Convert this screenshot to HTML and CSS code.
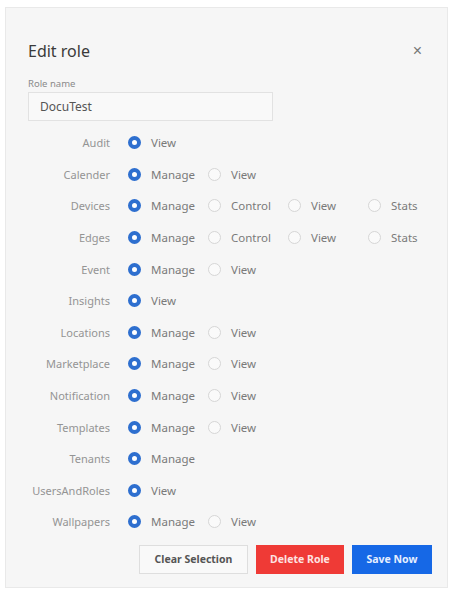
FILE: index.html
```html
<!DOCTYPE html>
<html lang="en">
  <head>
    <meta charset="UTF-8" />
    <meta name="viewport" content="width=device-width, initial-scale=1.0" />
    <title>Edit role</title>
    <link rel="stylesheet" href="styles.css">
  </head>
  <body>
    <div class="modal">
      <div class="modal-header">
        <h2 class="modal-title">Edit role</h2>
        <button type="button" class="close-btn">&times;</button>
      </div>

      <label class="field-label">Role name</label>
      <input type="text" class="role-input" value="DocuTest" />

      <div class="perm-list">
        <div class="perm-row">
          <span class="perm-name">Audit</span>
          <label class="opt"><span class="radio checked"></span>View</label>
        </div>
        <div class="perm-row">
          <span class="perm-name">Calender</span>
          <label class="opt"><span class="radio checked"></span>Manage</label>
          <label class="opt"><span class="radio"></span>View</label>
        </div>
        <div class="perm-row">
          <span class="perm-name">Devices</span>
          <label class="opt"><span class="radio checked"></span>Manage</label>
          <label class="opt"><span class="radio"></span>Control</label>
          <label class="opt"><span class="radio"></span>View</label>
          <label class="opt"><span class="radio"></span>Stats</label>
        </div>
        <div class="perm-row">
          <span class="perm-name">Edges</span>
          <label class="opt"><span class="radio checked"></span>Manage</label>
          <label class="opt"><span class="radio"></span>Control</label>
          <label class="opt"><span class="radio"></span>View</label>
          <label class="opt"><span class="radio"></span>Stats</label>
        </div>
        <div class="perm-row">
          <span class="perm-name">Event</span>
          <label class="opt"><span class="radio checked"></span>Manage</label>
          <label class="opt"><span class="radio"></span>View</label>
        </div>
        <div class="perm-row">
          <span class="perm-name">Insights</span>
          <label class="opt"><span class="radio checked"></span>View</label>
        </div>
        <div class="perm-row">
          <span class="perm-name">Locations</span>
          <label class="opt"><span class="radio checked"></span>Manage</label>
          <label class="opt"><span class="radio"></span>View</label>
        </div>
        <div class="perm-row">
          <span class="perm-name">Marketplace</span>
          <label class="opt"><span class="radio checked"></span>Manage</label>
          <label class="opt"><span class="radio"></span>View</label>
        </div>
        <div class="perm-row">
          <span class="perm-name">Notification</span>
          <label class="opt"><span class="radio checked"></span>Manage</label>
          <label class="opt"><span class="radio"></span>View</label>
        </div>
        <div class="perm-row">
          <span class="perm-name">Templates</span>
          <label class="opt"><span class="radio checked"></span>Manage</label>
          <label class="opt"><span class="radio"></span>View</label>
        </div>
        <div class="perm-row">
          <span class="perm-name">Tenants</span>
          <label class="opt"><span class="radio checked"></span>Manage</label>
        </div>
        <div class="perm-row">
          <span class="perm-name">UsersAndRoles</span>
          <label class="opt"><span class="radio checked"></span>View</label>
        </div>
        <div class="perm-row">
          <span class="perm-name">Wallpapers</span>
          <label class="opt"><span class="radio checked"></span>Manage</label>
          <label class="opt"><span class="radio"></span>View</label>
        </div>
      </div>

      <div class="actions">
        <button type="button" class="btn btn-clear">Clear Selection</button>
        <button type="button" class="btn btn-delete">Delete Role</button>
        <button type="button" class="btn btn-save">Save Now</button>
      </div>
    </div>
  </body>
</html>
```

FILE: styles.css
```css
body {
  margin: 0;
  background: #ffffff;
  font-family: "Noto Sans", "Open Sans", sans-serif;
}
.modal {
  width: 443px;
  height: 581px;
  margin: 7px 0 0 5px;
  box-sizing: border-box;
  padding: 33px 15px 0 22px;
  background: #f6f6f6;
  border: 1px solid #e9e9e9;
}
.modal-header {
  display: flex;
  justify-content: space-between;
  align-items: center;
  height: 20px;
}
.modal-title {
  margin: 0;
  font-size: 16px;
  font-weight: 400;
  color: #3a3a3a;
}
.close-btn {
  margin-right: 10px;
  border: none;
  background: none;
  padding: 0;
  font-size: 16px;
  color: #777;
  line-height: 1;
}
.field-label {
  display: block;
  margin-top: 16px;
  font-size: 9.5px;
  color: #8a8a8a;
  line-height: 13px;
}
.role-input {
  display: block;
  width: 245px;
  height: 29px;
  margin-top: 2px;
  padding: 0 11px;
  box-sizing: border-box;
  border: 1px solid #e2e2e2;
  background: #f9f9f9;
  font-family: inherit;
  font-size: 12px;
  color: #555;
}
.perm-list {
  margin-top: 6px;
}
.perm-row {
  display: flex;
  align-items: center;
  height: 31.6px;
}
.perm-name {
  flex-shrink: 0;
  width: 82px;
  margin-right: 18px;
  text-align: right;
  font-size: 11px;
  color: #949494;
}
.opt {
  flex-shrink: 0;
  display: flex;
  align-items: center;
  width: 80px;
  font-size: 11.5px;
  color: #7a7a7a;
}
.radio {
  width: 13px;
  height: 13px;
  margin-right: 10px;
  box-sizing: border-box;
  border-radius: 50%;
  border: 1px solid #d6d6d6;
  background: #fafafa;
}
.radio.checked {
  border: 4px solid #2e6fcf;
  background: #ffffff;
}
.actions {
  display: flex;
  justify-content: flex-end;
  gap: 8px;
  margin-top: 7px;
}
.btn {
  height: 29px;
  border: none;
  padding: 0 12px;
  font-family: inherit;
  font-size: 10.5px;
  font-weight: 700;
}
.btn-clear {
  width: 109px;
  background: #f9f9f9;
  border: 1px solid #dedede;
  color: #555;
}
.btn-delete {
  width: 88px;
  background: #ef3a36;
  color: #fde3e2;
}
.btn-save {
  width: 80px;
  background: #1668e6;
  color: #e6efff;
}
```
